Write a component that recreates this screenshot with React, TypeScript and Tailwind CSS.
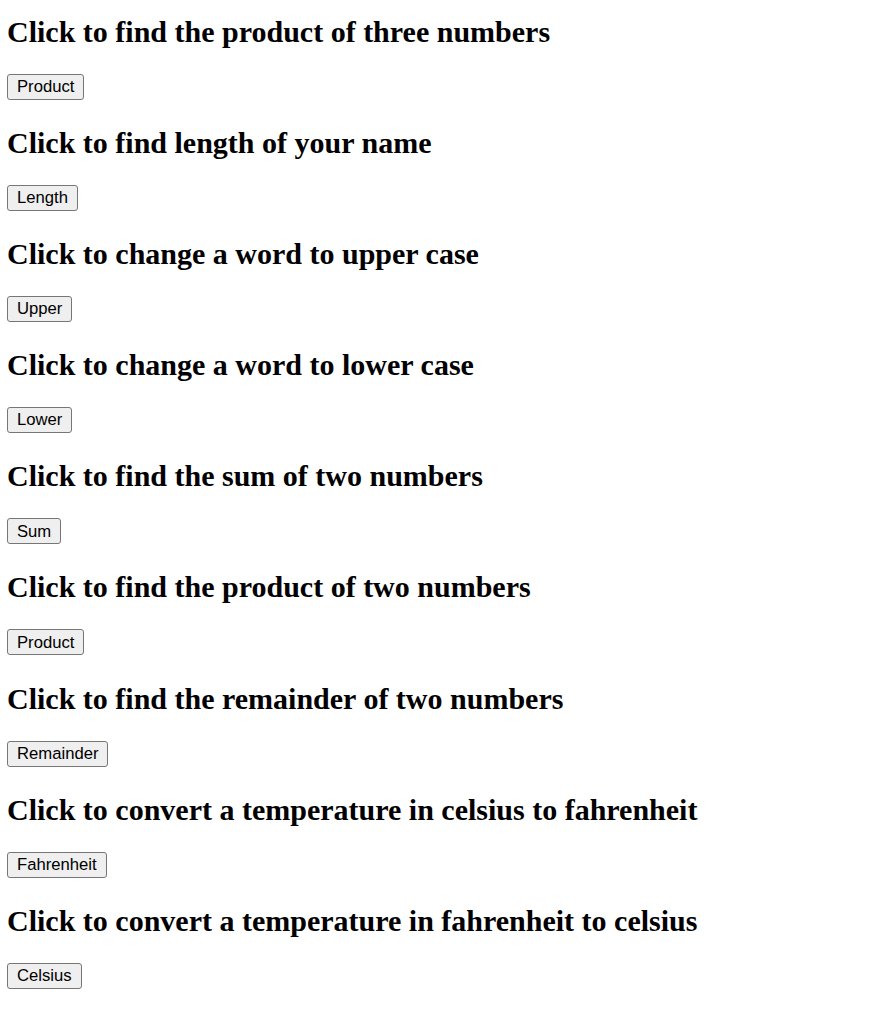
const sections = [
  { title: "Click to find the product of three numbers", label: "Product" },
  { title: "Click to find length of your name", label: "Length" },
  { title: "Click to change a word to upper case", label: "Upper" },
  { title: "Click to change a word to lower case", label: "Lower" },
  { title: "Click to find the sum of two numbers", label: "Sum" },
  { title: "Click to find the product of two numbers", label: "Product" },
  { title: "Click to find the remainder of two numbers", label: "Remainder" },
  { title: "Click to convert a temperature in celsius to fahrenheit", label: "Fahrenheit" },
  { title: "Click to convert a temperature in fahrenheit to celsius", label: "Celsius" },
];

export default function App() {
  return (
    <div className="min-h-screen bg-white text-black pl-[7px] pt-[15px]">
      {sections.map((s, i) => (
        <div key={i} className="flex flex-col items-start pb-[26.1px]">
          <h2 className="font-['Liberation_Serif',serif] font-bold text-[30px] leading-[34px]">
            {s.title}
          </h2>
          <button className="mt-[25px] h-[26px] px-[9px] pt-[1px] border border-[#767676] rounded-[3px] bg-[#efefef] text-[16.67px] font-['Liberation_Sans',Arial,sans-serif] text-black leading-none">
            {s.label}
          </button>
        </div>
      ))}
    </div>
  );
}
